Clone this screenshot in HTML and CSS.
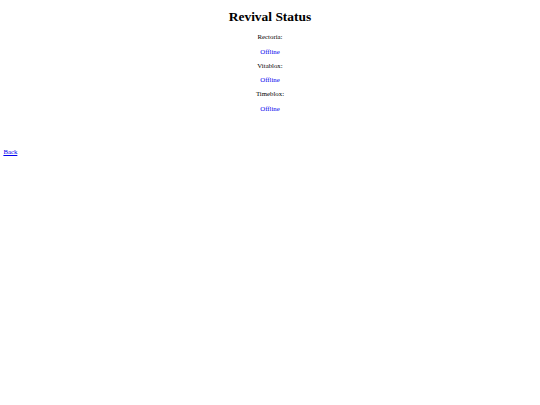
FILE: index.html
```html
<!DOCTYPE html>
<html>
<head>
<meta charset="utf-8">
<link rel="stylesheet" href="styles.css">
</head>
<body>
<div class="page">
  <h1 class="title">Revival Status</h1>
  <div class="list">
    <p class="label">Rectoria:</p>
    <p class="status">Offline</p>
    <p class="label">Vitablox:</p>
    <p class="status">Offline</p>
    <p class="label">Timeblox:</p>
    <p class="status">Offline</p>
  </div>
  <a class="back" href="#">Back</a>
</div>
</body>
</html>
```
FILE: styles.css
```css
html, body {
  margin: 0;
  padding: 0;
  background: #fff;
}
.page {
  font-family: "Liberation Serif", "Times New Roman", serif;
  color: #000;
  padding: 9px 3.4px 0 3.4px;
  display: flex;
  flex-direction: column;
}
.title {
  margin: 0;
  font-size: 13.44px;
  line-height: 15.5px;
  font-weight: bold;
  text-align: center;
}
.list {
  margin-top: 8.8px;
  display: flex;
  flex-direction: column;
  gap: 6.55px;
}
.label, .status {
  margin: 0;
  font-size: 6.8px;
  line-height: 7.73px;
  text-align: center;
}
.status {
  color: #0000ee;
}
.back {
  margin-top: 35.2px;
  font-size: 6.8px;
  line-height: 8px;
  color: #0000ee;
  text-decoration: underline;
  text-decoration-thickness: 1px;
  text-underline-offset: 1px;
  align-self: flex-start;
}
```
